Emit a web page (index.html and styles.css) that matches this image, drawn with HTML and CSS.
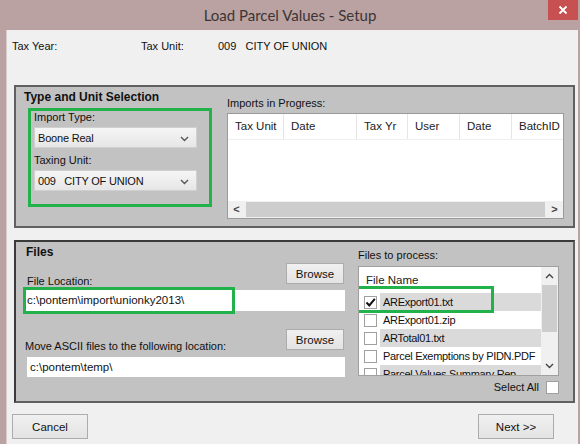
FILE: index.html
```html
<!DOCTYPE html>
<html>
<head>
<meta charset="utf-8">
<link rel="stylesheet" href="styles.css">
</head>
<body>
<div class="window">
  <div class="titlebar">
    <div class="title">Load Parcel Values - Setup</div>
    <div class="close"><svg width="10" height="10" viewBox="0 0 10 10"><path d="M1.5 1.5 L8.5 8.5 M8.5 1.5 L1.5 8.5" stroke="#fff" stroke-width="1.8"/></svg></div>
  </div>
  <div class="client">
    <div class="info">
      <span class="lbl-year">Tax Year:</span>
      <span class="lbl-unit">Tax Unit:</span>
      <span class="val-unit">009&nbsp;&nbsp; CITY OF UNION</span>
    </div>

    <div class="panel panel1">
      <div class="p1-left">
        <div class="ptitle">Type and Unit Selection</div>
        <div class="greenbox">
          <div class="lab">Import Type:</div>
          <div class="select"><span>Boone Real</span><svg class="chev" width="9" height="6" viewBox="0 0 9 6"><path d="M1 1 L4.5 4.5 L8 1" fill="none" stroke="#555" stroke-width="1.4"/></svg></div>
          <div class="lab lab2">Taxing Unit:</div>
          <div class="select"><span>009&nbsp;&nbsp; CITY OF UNION</span><svg class="chev" width="9" height="6" viewBox="0 0 9 6"><path d="M1 1 L4.5 4.5 L8 1" fill="none" stroke="#555" stroke-width="1.4"/></svg></div>
        </div>
      </div>
      <div class="p1-right">
        <div class="lab imp">Imports in Progress:</div>
        <div class="grid">
          <div class="ghead">
            <div class="gc c1">Tax Unit</div>
            <div class="gc c2">Date</div>
            <div class="gc c3">Tax Yr</div>
            <div class="gc c4">User</div>
            <div class="gc c5">Date</div>
            <div class="gc c6">BatchID</div>
          </div>
          <div class="gbody"></div>
          <div class="hscroll">
            <div class="arr">&lt;</div>
            <div class="hthumb"></div>
            <div class="arr">&gt;</div>
          </div>
        </div>
      </div>
    </div>

    <div class="panel panel2">
      <div class="p2-left">
        <div class="ptitle files">Files</div>
        <div class="brow brow1">
          <div class="lab">File Location:</div>
          <div class="btn browse">Browse</div>
        </div>
        <div class="inwrap">
          <div class="input in1">c:\pontem\import\unionky2013\</div>
          <div class="hl hl-input"></div>
        </div>
        <div class="brow brow2">
          <div class="lab">Move ASCII files to the following location:</div>
          <div class="btn browse">Browse</div>
        </div>
        <div class="input in2">c:\pontem\temp\</div>
      </div>
      <div class="p2-right">
        <div class="lab ftp">Files to process:</div>
        <div class="listbox">
          <div class="lmain">
            <div class="lhead">File Name</div>
            <div class="lrow alt"><span class="cb checked"><svg width="11" height="11" viewBox="0 0 11 11"><path d="M1.5 5.5 L4.3 8.5 L9.8 1.8" fill="none" stroke="#111" stroke-width="2"/></svg></span><span class="lt">ARExport01.txt</span></div>
            <div class="lrow"><span class="cb"></span><span class="lt">ARExport01.zip</span></div>
            <div class="lrow alt"><span class="cb"></span><span class="lt">ARTotal01.txt</span></div>
            <div class="lrow"><span class="cb"></span><span class="lt">Parcel Exemptions by PIDN.PDF</span></div>
            <div class="lrow alt"><span class="cb"></span><span class="lt">Parcel Values Summary Rep</span></div>
            <div class="hl hl-row"></div>
          </div>
          <div class="vscroll">
            <svg class="varr" width="9" height="6" viewBox="0 0 9 6"><path d="M1 5 L4.5 1.5 L8 5" fill="none" stroke="#444" stroke-width="1.4"/></svg>
            <div class="vthumb"></div>
            <div class="vspace"></div>
            <svg class="varr" width="9" height="6" viewBox="0 0 9 6"><path d="M1 1 L4.5 4.5 L8 1" fill="none" stroke="#444" stroke-width="1.4"/></svg>
          </div>
        </div>
        <div class="selall"><span class="lab">Select All</span><span class="cb sa"></span></div>
      </div>
    </div>

    <div class="buttons">
      <div class="btn bbtn">Cancel</div>
      <div class="btn bbtn">Next &gt;&gt;</div>
    </div>
  </div>
</div>
</body>
</html>
```

FILE: styles.css
```css
* { box-sizing: border-box; }
html, body { margin: 0; padding: 0; }
body {
  width: 580px; height: 444px; overflow: hidden;
  font-family: "Liberation Sans", Arial, sans-serif;
  font-size: 11px; color: #111;
}
.window {
  width: 580px; height: 444px;
  background: #b9a2a1;
  display: flex; flex-direction: column;
}
.titlebar {
  height: 30px; flex: none;
  display: flex; align-items: flex-start;
  padding-left: 32px;
}
.title {
  flex: 1; text-align: center;
  font-family: Lato, "Noto Sans", sans-serif;
  font-size: 15px; color: #3d3535;
  line-height: 30px;
}
.close {
  width: 30px; height: 20px; margin-right: 2px;
  background: #c75050;
  display: flex; align-items: center; justify-content: center;
}
.client {
  flex: 1;
  margin: 0 2px 0 6px;
  background: #f0f0f0;
  border-left: 1px solid #d8cccc;
  display: flex; flex-direction: column;
}
.info {
  height: 55px; flex: none;
  padding: 10px 0 0 5px;
  line-height: 13px;
  display: flex;
}
.lbl-year { width: 129px; }
.lbl-unit { width: 77px; }

.panel {
  background: #c2c2c2;
  border: 2px solid #606060;
  margin-left: 7px; margin-right: 3px;
  display: flex;
}
.panel1 { height: 143px; }
.panel2 { height: 163px; margin-top: 12px; border-color: #3a3a3a #606060 #606060 #3a3a3a; }
.ptitle {
  font-weight: bold; font-size: 12px; line-height: 14px;
}
.lab { line-height: 13px; white-space: nowrap; }

/* panel 1 */
.p1-left { width: 210px; padding: 3px 0 0 8px; }
.greenbox {
  margin: 4px 0 0 4px;
  width: 184px; height: 99px;
  border: 3px solid #22b24c;
  padding: 0 0 0 3px;
}
.lab2 { margin-top: 6px; }
.select {
  margin-top: 3px;
  width: 163px; height: 21px;
  background: linear-gradient(#f5f5f5, #e6e6e6);
  border: 1px solid #d0d0d0;
  display: flex; align-items: center; justify-content: space-between;
  padding: 0 7px 0 3px;
  font-size: 11px; letter-spacing: -0.2px;
}
.chev { flex: none; margin-top: 2px; }
.p1-right { flex: 1; padding: 10px 7px 0 1px; }
.grid {
  margin-top: 3px;
  width: 337px; height: 106px;
  border: 1px solid #9a9a9a;
  background: #fff;
  display: flex; flex-direction: column;
}
.ghead { height: 26px; display: flex; border-bottom: 1px solid #efefef; }
.gc {
  line-height: 25px; padding-left: 7px;
  border-right: 1px solid #e6e6e6;
  font-size: 11.5px; color: #222;
}
.c1 { width: 56px; }
.c2 { width: 73px; }
.c3 { width: 51px; }
.c4 { width: 52px; }
.c5 { width: 52px; }
.c6 { flex: 1; border-right: none; }
.gbody { flex: 1; }
.hscroll {
  height: 17px; background: #f0f0f0;
  display: flex; align-items: center;
}
.arr { width: 17px; text-align: center; font-size: 11px; font-weight: bold; color: #444; line-height: 17px; }
.hthumb { flex: 1; height: 15px; background: #cdcdcd; margin: 0 1px; }

/* panel 2 */
.p2-left { width: 329px; padding: 3px 0 0 0; }
.files { margin-left: 10px; }
.brow { display: flex; justify-content: space-between; }
.brow .lab { align-self: flex-end; }
.brow1 { margin-top: 4px; height: 27px; padding-left: 11px; }
.brow1 .lab { padding-bottom: 2px; }
.brow2 { margin-top: 18px; height: 28px; padding-left: 9px; }
.brow2 .lab { padding-bottom: 4px; }
.btn {
  background: linear-gradient(#f0f0f0, #e3e3e3);
  border: 1px solid #acacac;
  display: flex; align-items: center; justify-content: center;
  font-size: 11.5px;
}
.browse { width: 58px; height: 21px; margin-right: 1px; }
.inwrap { position: relative; }
.input {
  background: #fff;
  line-height: 21px; height: 21px;
  padding-left: 3px;
  font-size: 11.5px;
}
.in1 { margin-left: 8px; width: 321px; }
.in2 { margin-left: 11px; width: 318px; height: 20px; line-height: 20px; }
.hl { position: absolute; border: 3px solid #22b24c; }
.hl-input { left: 7px; top: -3px; width: 212px; height: 27px; }

.p2-right { flex: 1; padding: 7px 0 0 13px; }
.listbox {
  margin-top: 4px;
  width: 201px; height: 110px;
  border: 1px solid #a0a0a0;
  background: #fff;
  display: flex;
}
.lmain { flex: 1; position: relative; overflow: hidden; }
.lhead { height: 26px; line-height: 26px; padding-left: 7px; font-size: 11.5px; color: #222; }
.lrow {
  height: 18px; display: flex; align-items: center;
  font-size: 11px;
}
.lrow .cb { margin-left: 5px; }
.lt { flex: 1; height: 18px; line-height: 18px; padding-left: 3px; margin-left: 3px; white-space: nowrap; overflow: hidden; letter-spacing: -0.3px; }
.lrow.alt .lt { background: #dadada; }
.cb {
  width: 13px; height: 13px; flex: none;
  background: #fff; border: 1px solid #a0a0a0;
  display: flex; align-items: center; justify-content: center;
}
.hl-row { left: -3px; top: 19px; width: 138px; height: 27px; }
.vscroll {
  width: 17px; flex: none; background: #f0f0f0;
  display: flex; flex-direction: column; align-items: center;
}
.varr { margin: 6px 0 6px; flex: none; }
.vthumb { width: 15px; height: 47px; background: #cdcdcd; }
.vspace { flex: 1; }
.selall {
  display: flex; justify-content: flex-end; align-items: center;
  margin-top: 5px; width: 201px;
}
.selall .lab { margin-right: 7px; }

.buttons {
  display: flex; justify-content: space-between;
  margin-top: 11px;
  padding: 0 24px 0 5px;
}
.bbtn { width: 76px; height: 25px; }
```
